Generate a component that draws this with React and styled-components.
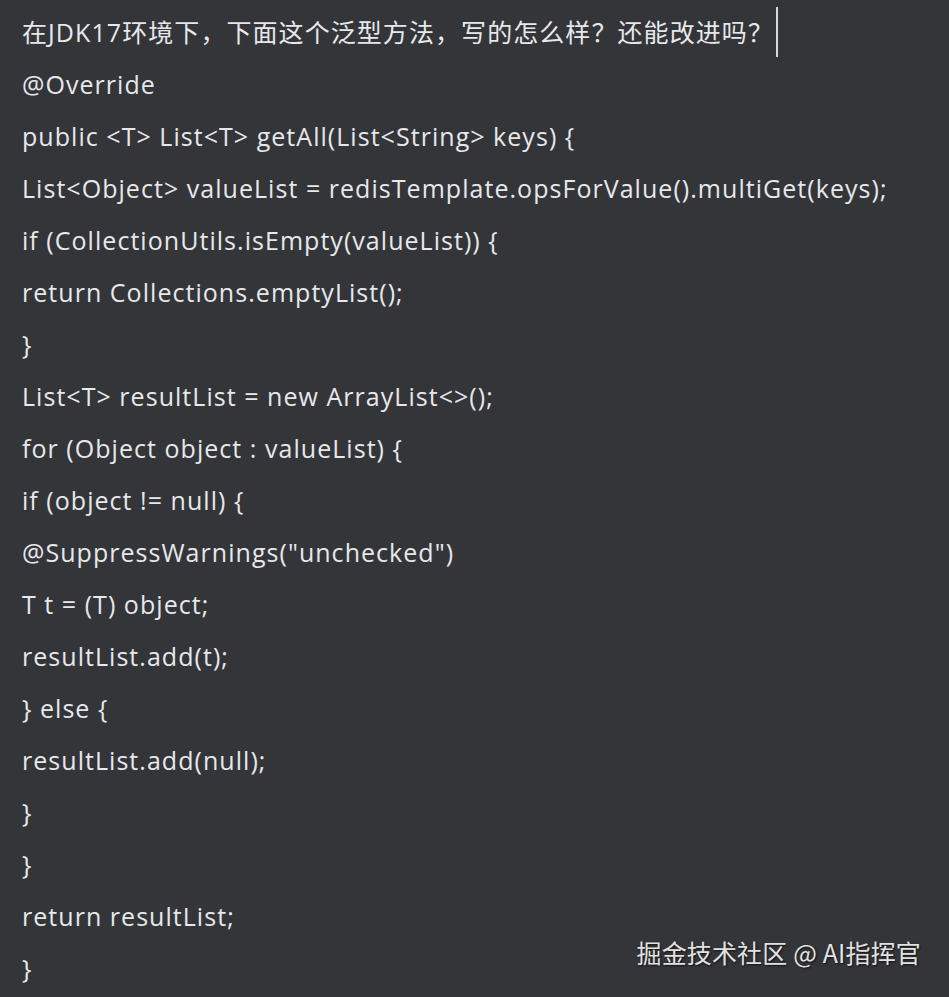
import React from "react";
import styled, { createGlobalStyle } from "styled-components";

const Global = createGlobalStyle`
  html, body { margin: 0; padding: 0; background: #343539; }
  body { width: 949px; height: 997px; overflow: hidden; }
`;

const Page = styled.div`
  position: relative;
  width: 949px;
  height: 997px;
  background: #343539;
  box-sizing: border-box;
  padding: 6px 0 0 22px;
  font-family: "Open Sans", "Noto Sans", "Noto Sans CJK SC", sans-serif;
  color: #e6e8ec;
`;

const Line = styled.div`
  height: 52px;
  line-height: 52px;
  font-size: 25px;
  letter-spacing: ${(p) => (p.$cjk ? "1.07px" : "1.04px")};
  white-space: pre;
  display: flex;
  align-items: center;
`;

const Cursor = styled.span`
  display: inline-block;
  width: 2px;
  height: 50px;
  background: #d8d8d8;
  margin-left: 2px;
`;

const Watermark = styled.div`
  position: absolute;
  right: 28px;
  bottom: 27px;
  font-family: "Noto Sans CJK SC", "Noto Sans", sans-serif;
  font-size: 25px;
  letter-spacing: 0.15px;
  color: #e2e2e2;
  text-shadow: 1px 1px 2px rgba(0, 0, 0, 0.7);
`;

const lines = [
  "@Override",
  "public <T> List<T> getAll(List<String> keys) {",
  "List<Object> valueList = redisTemplate.opsForValue().multiGet(keys);",
  "if (CollectionUtils.isEmpty(valueList)) {",
  "return Collections.emptyList();",
  "}",
  "List<T> resultList = new ArrayList<>();",
  "for (Object object : valueList) {",
  "if (object != null) {",
  '@SuppressWarnings("unchecked")',
  "T t = (T) object;",
  "resultList.add(t);",
  "} else {",
  "resultList.add(null);",
  "}",
  "}",
  "return resultList;",
  "}",
];

export default function App() {
  return (
    <Page>
      <Global />
      <Line $cjk>
        在JDK17环境下，下面这个泛型方法，写的怎么样？还能改进吗？
        <Cursor />
      </Line>
      {lines.map((l, i) => (
        <Line key={i}>{l}</Line>
      ))}
      <Watermark>掘金技术社区 @ AI指挥官</Watermark>
    </Page>
  );
}
